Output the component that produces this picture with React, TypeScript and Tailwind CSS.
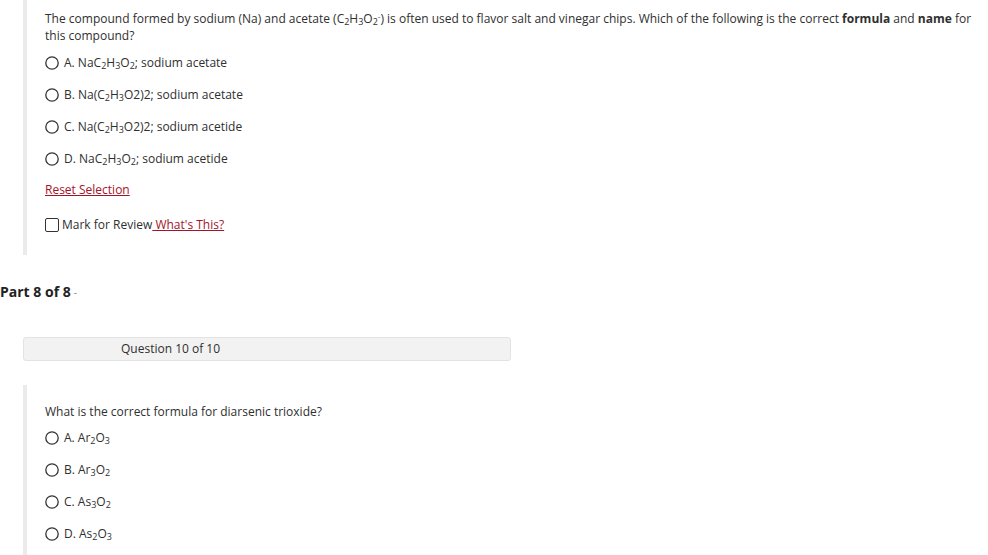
import React from "react";

const Sub = ({ children }: { children: React.ReactNode }) => (
  <span className="text-[9px] align-[-2px] leading-none">{children}</span>
);

const Radio = () => (
  <svg width="14" height="14" viewBox="0 0 14 14" className="shrink-0">
    <circle cx="7" cy="7" r="6.2" fill="white" stroke="#333" strokeWidth="1.3" />
  </svg>
);

const Option = ({ children }: { children: React.ReactNode }) => (
  <div className="flex items-center h-[20px] gap-[5px]">
    <Radio />
    <span className="leading-[20px]">{children}</span>
  </div>
);

export default function App() {
  return (
    <div
      className="w-[988px] h-[555px] overflow-hidden bg-white text-[#2f2f2f] text-[12px]"
      style={{ fontFamily: '"Open Sans", "Noto Sans", sans-serif' }}
    >
      <div className="pl-[23px]">
        <div className="border-l-[4px] border-[#ebebeb] pl-[18px] pt-[10px] pb-[20px] w-[958px]">
          <p className="leading-[17px]">
            The compound formed by sodium (Na) and acetate (C<Sub>2</Sub>H<Sub>3</Sub>O<Sub>2</Sub>
            <span className="text-[8px] align-[4px] leading-none">-</span>) is often used to flavor salt and vinegar chips. Which of the following is the correct{" "}
            <b className="font-bold">formula</b> and <b className="font-bold">name</b> for this compound?
          </p>
          <div className="flex flex-col gap-[12px] mt-[9px]">
            <Option>A. NaC<Sub>2</Sub>H<Sub>3</Sub>O<Sub>2</Sub>; sodium acetate</Option>
            <Option>B. Na(C<Sub>2</Sub>H<Sub>3</Sub>O2)2; sodium acetate</Option>
            <Option>C. Na(C<Sub>2</Sub>H<Sub>3</Sub>O2)2; sodium acetide</Option>
            <Option>D. NaC<Sub>2</Sub>H<Sub>3</Sub>O<Sub>2</Sub>; sodium acetide</Option>
          </div>
          <div className="mt-[12px] leading-[18px]">
            <span className="text-[#a3142a] underline">Reset Selection</span>
          </div>
          <div className="mt-[16px] h-[20px] flex items-center">
            <span className="inline-block w-[14px] h-[14px] border-[1.3px] border-[#333] rounded-[2px] mr-[3px]" />
            <span>Mark for Review</span>
            <span className="text-[#a3142a] underline whitespace-pre"> What's This?</span>
          </div>
        </div>
      </div>

      <div className="mt-[26px] h-[20px] flex items-center">
        <span className="font-bold text-[14px] text-[#222]">Part 8 of 8</span>
        <span className="text-[10px] text-[#888] ml-[3px] mt-[2px]">-</span>
      </div>

      <div className="ml-[23px] mt-[36px] w-[488px] h-[24px] bg-[#f2f2f2] border border-[#e3e3e3] rounded-[3px] flex items-center pl-[97px]">
        Question 10 of 10
      </div>

      <div className="pl-[23px] mt-[24px]">
        <div className="border-l-[4px] border-[#ebebeb] pl-[18px] pt-[18px] pb-[20px]">
          <p className="leading-[17px]">What is the correct formula for diarsenic trioxide?</p>
          <div className="flex flex-col gap-[12px] mt-[8px]">
            <Option>A. Ar<Sub>2</Sub>O<Sub>3</Sub></Option>
            <Option>B. Ar<Sub>3</Sub>O<Sub>2</Sub></Option>
            <Option>C. As<Sub>3</Sub>O<Sub>2</Sub></Option>
            <Option>D. As<Sub>2</Sub>O<Sub>3</Sub></Option>
          </div>
        </div>
      </div>
    </div>
  );
}
